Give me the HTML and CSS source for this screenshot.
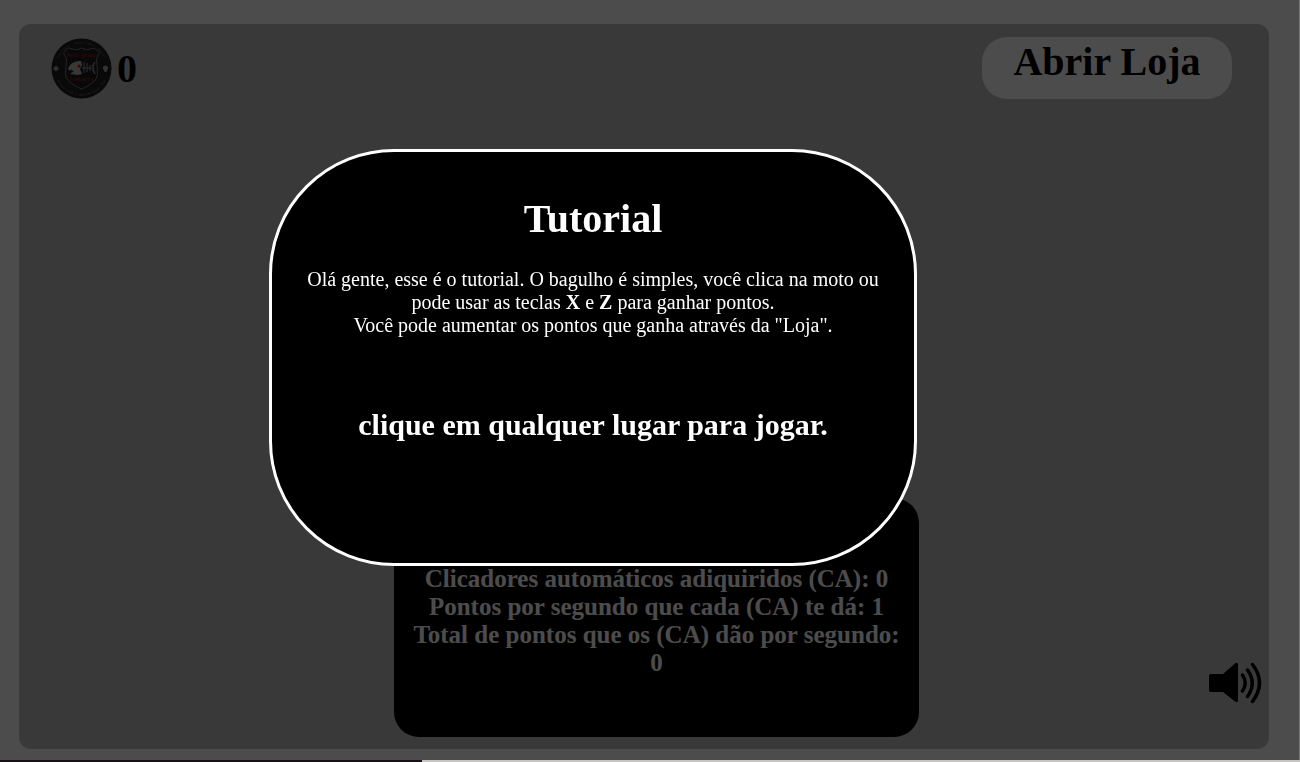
FILE: index.html
```html
<!DOCTYPE html>
<html lang="pt-BR">
<head>
<meta charset="utf-8">
<title>Moto Clicker</title>
<link rel="stylesheet" href="styles.css">
</head>
<body>
<main class="board">
  <header class="topbar">
    <div class="score">
      <svg class="badge" viewBox="0 0 61 61" role="img" aria-label="Moto Grupo Lombarts">
        <defs>
          <path id="arc-top" d="M5.500 30.500a25 25 0 0 1 50 0"/>
          <path id="arc-bottom" d="M3.500 30.500a27 27 0 0 0 54 0"/>
        </defs>
        <circle cx="30.500" cy="30.500" r="30" fill="#202020"/>
        <path d="M30.500 10l5 2 8-2 5 5-3 6 1 15c-1 8-8 11-16 15-8-4-15-7-16-15l1-15-3-6 5-5 8 2z" fill="#1b1b1b" stroke="#777" stroke-width="1"/>
        <text class="ring"><textPath href="#arc-top" startOffset="50%">São Paulo - Moto Grupo - Brasil</textPath></text>
        <text class="ring"><textPath href="#arc-bottom" startOffset="50%">Motociclismo e amizade desde 2008</textPath></text>
        <text class="club" x="30.500" y="19">Moto Grupo</text>
        <text class="club" x="30.500" y="43">Lombarts</text>
        <path d="M17 31c2-6 7-8 13-8l1 4-2 4 2 5-4 1-8-1 3-2 1-2-2 1-1-2-1 2z" fill="#bbb"/>
        <path d="M31 30h9M33 24v11M36 25v9M39 27v6M44 24c-4 4-4 7 0 12-2-5-2-8 0-12" fill="none" stroke="#999"/>
        <circle cx="28" cy="28" r="1.500" fill="#d00"/>
        <path d="M5 28v5M2.500 30.500h5" stroke="#aaa" stroke-width="1.500"/>
        <circle cx="5" cy="30.500" r="2" fill="none" stroke="#999"/>
        <path d="M52 29q2.500-3 5 0v2l-1 1-.5 2h-2l-.5-2-1-1z" fill="#aaa"/>
      </svg>
      <strong>0</strong>
    </div>
    <button class="shop" type="button">Abrir Loja</button>
  </header>
  <section class="stats">
    <p>Clicadores automáticos adiquiridos (CA): 0</p>
    <p>Pontos por segundo que cada (CA) te dá: 1</p>
    <p>Total de pontos que os (CA) dão por segundo: 0</p>
  </section>
  <button class="sound" type="button" aria-label="Som">
    <svg viewBox="0 0 53 42">
      <path d="M2 12h12L26 1.500q3-2 3 1v36q0 3-3 1L14 30H2q-2 0-2-2V14q0-2 2-2z"/>
      <path d="M33.500 13q5.500 8 0 16M38.500 8q9.500 13 0 26.500M43.500 2.500q14 18 0 37" fill="none" stroke="#000" stroke-width="3.500" stroke-linecap="round"/>
    </svg>
  </button>
</main>
<footer class="edge"><span class="edge-dark"></span></footer>
<div class="overlay">
  <div class="tutorial" role="dialog" aria-labelledby="tutorial-title">
    <h1 id="tutorial-title">Tutorial</h1>
    <p>Olá gente, esse é o tutorial. O bagulho é simples, você clica na moto ou pode usar as teclas <b>X</b> e <b>Z</b> para ganhar pontos.<br>Você pode aumentar os pontos que ganha através da "Loja".</p>
    <h2>clique em qualquer lugar para jogar.</h2>
  </div>
</div>
</body>
</html>
```

FILE: styles.css
```css
* {
  box-sizing: border-box;
}

body {
  margin: 0;
  min-height: 100vh;
  display: flex;
  flex-direction: column;
  background: #fff;
  color: #000;
  font-family: "Liberation Serif", "Times New Roman", serif;
}

.board {
  flex: 1;
  display: flex;
  flex-direction: column;
  margin: 24px 31px 11px 19px;
  padding: 13px 7px 12px 32px;
  border-radius: 12px;
  background: #bebebe;
}

.topbar {
  display: flex;
  justify-content: space-between;
  padding-right: 30px;
}

.score {
  display: flex;
  align-items: center;
  gap: 5px;
  font-size: 40px;
}

.badge {
  width: 61px;
  height: 61px;
}

.ring,
.club {
  font-family: "Liberation Mono", monospace;
  text-anchor: middle;
}

.ring {
  fill: #777;
  font-size: 3px;
}

.club {
  fill: #a01818;
  font-size: 5px;
  font-weight: bold;
}

.shop {
  width: 250px;
  height: 62px;
  padding: 0 0 14px;
  border: 0;
  border-radius: 25px;
  background: #fff;
  color: #000;
  font: bold 40px "Liberation Serif", "Times New Roman", serif;
}

.stats {
  width: 525px;
  min-height: 239px;
  margin: auto auto 0;
  padding: 67px 16px 0;
  border-radius: 25px;
  background: #000;
  color: #fff;
  font-size: 25px;
  font-weight: bold;
  line-height: 28px;
  text-align: center;
}

.stats p {
  margin: 0;
}

.sound {
  align-self: flex-end;
  width: 53px;
  height: 42px;
  margin: -75px 0 33px;
  padding: 0;
  border: 0;
  background: none;
}

.sound svg {
  display: block;
  width: 100%;
}

.edge {
  position: relative;
  z-index: 2;
  height: 2px;
  background: #c8c4c4;
}

.edge-dark {
  display: block;
  width: 422px;
  height: 100%;
  background: #181014;
}

.overlay {
  position: fixed;
  inset: 0;
  display: flex;
  align-items: center;
  justify-content: center;
  padding: 0 113px 47px 0;
  border-right: 1px solid #777;
  background: rgba(0, 0, 0, 0.7);
}

.tutorial {
  width: 648px;
  min-height: 417px;
  padding: 44px 30px;
  border: 3px solid #fff;
  border-radius: 125px;
  background: #000;
  color: #fff;
  text-align: center;
}

.tutorial h1 {
  margin: 0 0 26px;
  font-size: 40px;
  line-height: 46px;
}

.tutorial p {
  margin: 0;
  font-size: 20px;
  line-height: 23px;
}

.tutorial h2 {
  margin: 71px 0 0;
  font-size: 30px;
  line-height: 34px;
}
```
